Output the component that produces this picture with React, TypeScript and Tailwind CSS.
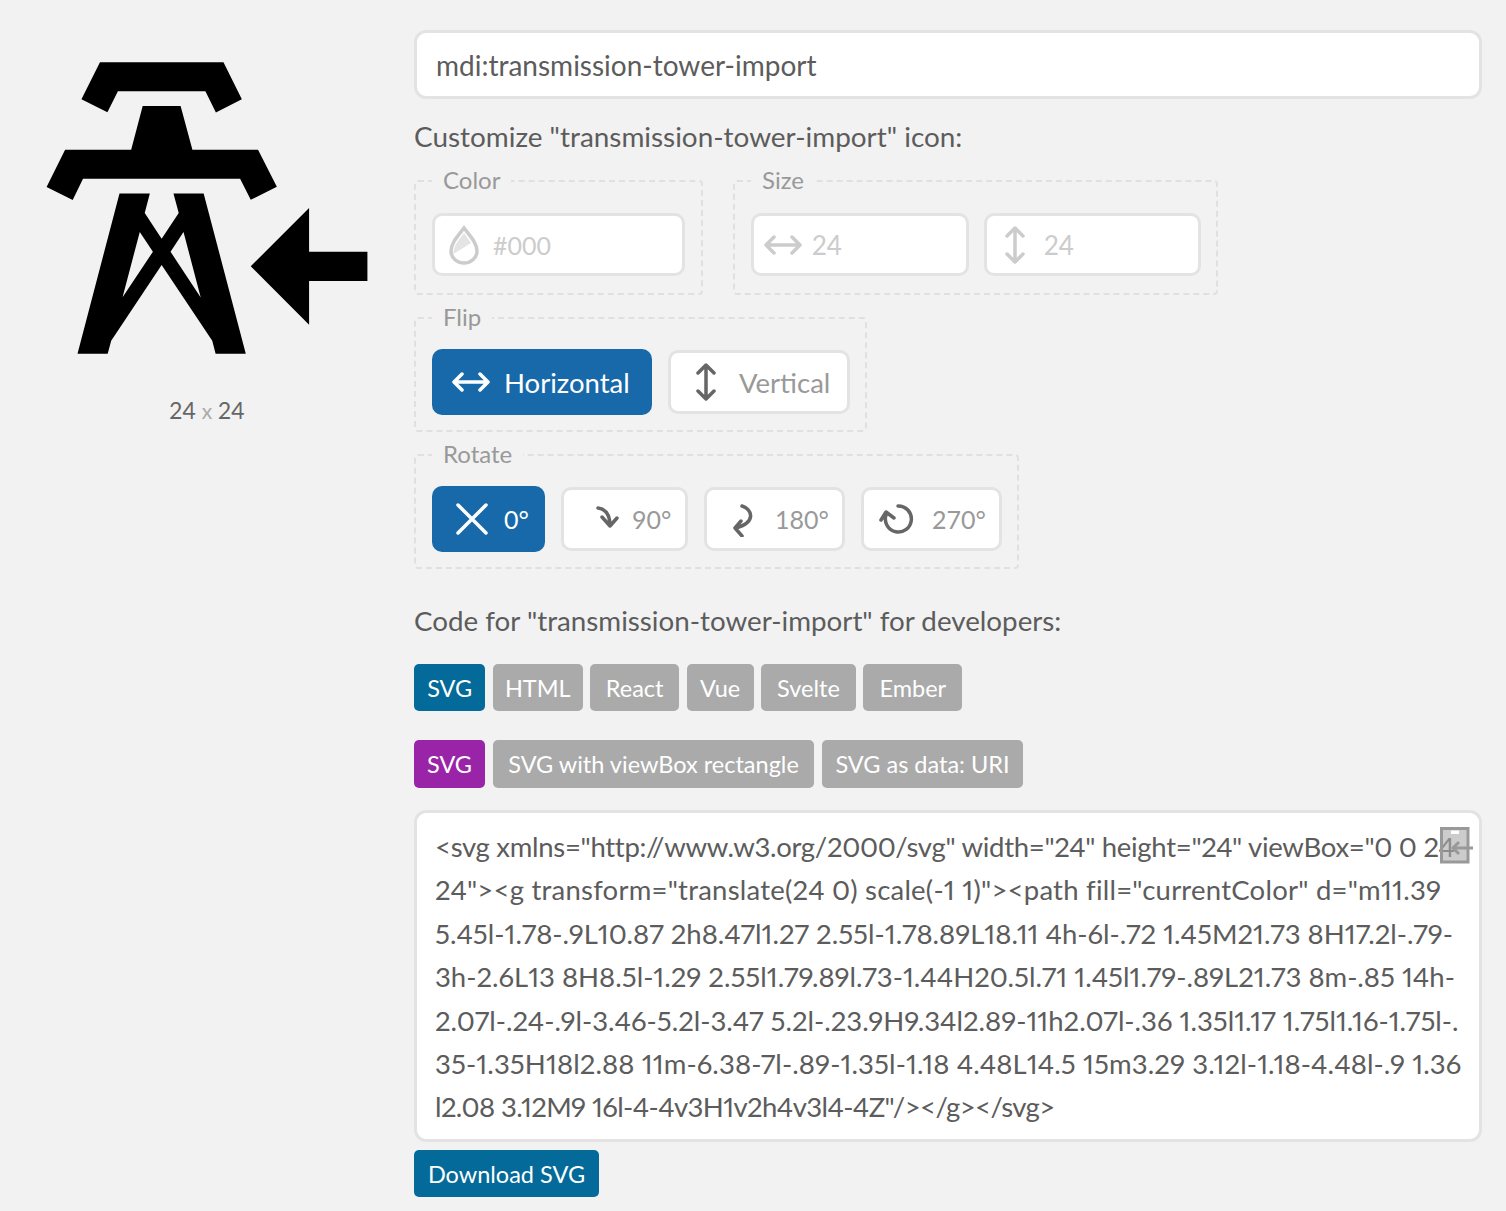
const iconPath =
  "m11.39 5.45l-1.78-.9L10.87 2h8.47l1.27 2.55l-1.78.89L18.11 4h-6l-.72 1.45M21.73 8H17.2l-.79-3h-2.6L13 8H8.5l-1.29 2.55l1.79.89l.73-1.44H20.5l.71 1.45l1.79-.89L21.73 8m-.85 14h-2.07l-.24-.9l-3.46-5.2l-3.47 5.2l-.23.9H9.34l2.89-11h2.07l-.36 1.35l1.17 1.75l1.16-1.75l-.35-1.35H18l2.88 11m-6.38-7l-.89-1.35l-1.18 4.48L14.5 15m3.29 3.12l-1.18-4.48l-.9 1.36l2.08 3.12M9 16l-4-4v3H1v2h4v3l4-4Z";

// tracking per line keeps the wrap ends where they are in the reference
const codeLines = [
  { text: '<svg xmlns="http://www.w3.org/2000/svg" width="24" height="24" viewBox="0 0 24', track: "tracking-[-0.3px]" },
  { text: '24"><g transform="translate(24 0) scale(-1 1)"><path fill="currentColor" d="m11.39', track: "tracking-[0.23px]" },
  { text: "5.45l-1.78-.9L10.87 2h8.47l1.27 2.55l-1.78.89L18.11 4h-6l-.72 1.45M21.73 8H17.2l-.79-", track: "" },
  { text: "3h-2.6L13 8H8.5l-1.29 2.55l1.79.89l.73-1.44H20.5l.71 1.45l1.79-.89L21.73 8m-.85 14h-", track: "" },
  { text: "2.07l-.24-.9l-3.46-5.2l-3.47 5.2l-.23.9H9.34l2.89-11h2.07l-.36 1.35l1.17 1.75l1.16-1.75l-.", track: "" },
  { text: "35-1.35H18l2.88 11m-6.38-7l-.89-1.35l-1.18 4.48L14.5 15m3.29 3.12l-1.18-4.48l-.9 1.36", track: "tracking-[0.1px]" },
  { text: 'l2.08 3.12M9 16l-4-4v3H1v2h4v3l4-4Z"/></g></svg>', track: "tracking-[-0.6px]" },
];

function ArrowH({ color }: { color: string }) {
  return (
    <svg width="38" height="22" viewBox="0 0 38 22" fill="none" stroke={color} strokeWidth="3.5" strokeLinecap="round" strokeLinejoin="round">
      <path d="M3 11h32M10 3l-8 8l8 8M28 3l8 8l-8 8" />
    </svg>
  );
}

function ArrowV({ color }: { color: string }) {
  return (
    <svg width="22" height="38" viewBox="0 0 22 38" fill="none" stroke={color} strokeWidth="3.5" strokeLinecap="round" strokeLinejoin="round">
      <path d="M11 3v32M3 10l8-8l8 8M3 28l8 8l8-8" />
    </svg>
  );
}

function Drop() {
  return (
    <svg width="34" height="40" viewBox="0 0 34 40">
      <path d="M17 3C11 11 4 18 4 26a13 12 0 0 0 26 0C30 18 23 11 17 3Z" fill="none" stroke="#ccc" strokeWidth="3.5" />
      <path d="M6.5 29C6 20 13 14 17 8C20 12 22 15 24 18Z" fill="#e4e4e4" />
    </svg>
  );
}

function Box({ legend, className, children }: { legend: string; className: string; children: React.ReactNode }) {
  return (
    <fieldset className={`border-2 border-dashed border-[#e0e0e0] rounded-[4px] pl-4 h-[127px] ${className}`}>
      <legend className="px-[11px] text-[#999] text-[24px] leading-[25px] -mb-1 -translate-y-px">{legend}</legend>
      {children}
    </fieldset>
  );
}

function NumInput({ width, pl, gap, icon, value, text = "text-[26px] proportional-nums" }: { width: string; pl: string; gap: string; icon: React.ReactNode; value: string; text?: string }) {
  return (
    <div className={`h-[63px] ${width} ${pl} ${gap} bg-white border-[3px] border-[#e3e3e3] rounded-[10px] flex items-center text-[#ccc] ${text}`}>
      {icon}
      <span className="pt-[2px]">{value}</span>
    </div>
  );
}

function Toggle({ width, pl, gap, active, icon, label, text = "text-[27.5px]" }: { width: string; pl: string; gap: string; active?: boolean; icon: React.ReactNode; label: string; text?: string }) {
  return (
    <button
      className={`${width} ${pl} ${gap} flex items-center rounded-[10px] ${text} ${
        active ? "h-[66px] bg-[#1769aa] text-white" : "h-[64px] bg-white text-[#999] border-[3px] border-[#e3e3e3]"
      }`}
    >
      {icon}
      <span className="pt-[2px]">{label}</span>
    </button>
  );
}

function Tab({ label, width, color = "bg-[#aaaaaa]", h = "h-[47px]" }: { label: string; width: string; color?: string; h?: string }) {
  return (
    <span className={`${width} ${h} ${color} rounded-[5px] text-white text-[23.5px] pt-[2px] flex items-center justify-center`}>
      {label}
    </span>
  );
}

export default function App() {
  return (
    <div className="w-[1506px] h-[1211px] bg-[#f2f2f2] flex font-['Lato',sans-serif] text-[#5c5c5c] overflow-hidden">
      <div className="w-[414px] flex flex-col items-center pt-[33px]">
        <svg width="350" height="350" viewBox="0 0 24 24">
          <g transform="translate(24 0) scale(-1 1)">
            <path fill="#000" d={iconPath} />
          </g>
        </svg>
        <div className="mt-[12px] text-[23px] leading-[30px] text-[#666] proportional-nums">
          24 <span className="text-[#aaa] text-[21px]">x</span> 24
        </div>
      </div>

      <div className="w-[1068px] pt-[30px]">
        <div className="h-[69px] bg-white border-[3px] border-[#e3e3e3] rounded-[12px] flex items-center pl-[19px] text-[28px]">
          mdi:transmission-tower-import
        </div>

        <div className="mt-[19px] h-[36px] text-[27.9px] leading-[36px]">Customize "transmission-tower-import" icon:</div>

        <div className="mt-[14px] flex gap-[30px]">
          <Box legend="Color" className="w-[289px]">
            <div className="pt-[24px]">
              <NumInput width="w-[253px]" pl="pl-[12px]" gap="gap-[12px]" icon={<Drop />} value="#000" text="text-[25px] tabular-nums" />
            </div>
          </Box>
          <Box legend="Size" className="w-[485px]">
            <div className="pt-[24px] flex gap-[15px]">
              <NumInput width="w-[218px]" pl="pl-[10px]" gap="gap-[10px]" icon={<ArrowH color="#ccc" />} value="24" />
              <NumInput width="w-[217px]" pl="pl-[17px]" gap="gap-[18px]" icon={<ArrowV color="#ccc" />} value="24" />
            </div>
          </Box>
        </div>

        <Box legend="Flip" className="w-[453px] mt-[10px]">
          <div className="pt-[23px] flex gap-[16px] items-center">
            <Toggle width="w-[220px]" pl="pl-[20px]" gap="gap-[14px]" active icon={<ArrowH color="#fff" />} label="Horizontal" />
            <Toggle width="w-[182px]" pl="pl-[24px]" gap="gap-[22px]" icon={<ArrowV color="#666" />} label="Vertical" />
          </div>
        </Box>

        <Box legend="Rotate" className="w-[605px] mt-[10px]">
          <div className="pt-[23px] flex gap-[16px] items-center">
            <Toggle
              width="w-[113px]"
              pl="pl-[24px]"
              gap="gap-[16px]"
              active
              label="0°"
              text="text-[25px]"
              icon={
                <svg width="32" height="32" viewBox="0 0 32 32" stroke="#fff" strokeWidth="3.5" strokeLinecap="round">
                  <path d="M2 2l28 28M30 2L2 30" />
                </svg>
              }
            />
            <Toggle
              width="w-[127px]"
              pl="pl-[25px]"
              gap="gap-[7px]"
              label="90°"
              text="text-[25px]"
              icon={
                <svg width="36" height="36" viewBox="0 0 36 36" fill="none" stroke="#666" strokeWidth="3.5" strokeLinecap="round" strokeLinejoin="round">
                  <path d="M9 7c7 1 12 6 12 18M13 16l8 9l7-8" />
                </svg>
              }
            />
            <Toggle
              width="w-[141px]"
              pl="pl-[14px]"
              gap="gap-[18px]"
              label="180°"
              text="text-[25px]"
              icon={
                <svg width="36" height="36" viewBox="0 0 36 36" fill="none" stroke="#666" strokeWidth="3.5" strokeLinecap="round" strokeLinejoin="round">
                  <path d="M21 5C31 8 36 21 15 27M20 20l-6 7l7 8" />
                </svg>
              }
            />
            <Toggle
              width="w-[141px]"
              pl="pl-[15px]"
              gap="gap-[17px]"
              label="270°"
              text="text-[25px]"
              icon={
                <svg width="36" height="36" viewBox="0 0 36 36" fill="none" stroke="#666" strokeWidth="3.5" strokeLinecap="round" strokeLinejoin="round">
                  <path d="M19 5A13 13 0 1 1 7 14M2 19l5-8l8 6" />
                </svg>
              }
            />
          </div>
        </Box>

        <div className="mt-[34px] h-[36px] text-[27.75px] leading-[36px]">Code for "transmission-tower-import" for developers:</div>

        <div className="mt-[25px] flex gap-[7.4px]">
          <Tab label="SVG" width="w-[71.4px]" color="bg-[#046a99]" />
          <Tab label="HTML" width="w-[90px]" />
          <Tab label="React" width="w-[89px]" />
          <Tab label="Vue" width="w-[67px]" />
          <Tab label="Svelte" width="w-[95px]" />
          <Tab label="Ember" width="w-[99px]" />
        </div>

        <div className="mt-[29px] flex gap-[8px]">
          <Tab label="SVG" width="w-[71px]" color="bg-[#9a24a8]" h="h-[48px]" />
          <Tab label="SVG with viewBox rectangle" width="w-[321px]" h="h-[48px]" />
          <Tab label="SVG as data: URI" width="w-[201px]" h="h-[48px]" />
        </div>

        <div className="relative mt-[22px] h-[332px] bg-white border-[3px] border-[#e3e3e3] rounded-[12px] pl-[18px] pt-[12px] text-[27.5px] leading-[43.4px] proportional-nums">
          {codeLines.map((line) => (
            <div key={line.text} className={`whitespace-nowrap ${line.track}`}>
              {line.text}
            </div>
          ))}
          <svg className="absolute right-[5px] top-[13px]" width="36" height="38" viewBox="0 0 36 38">
            <path d="M3.5 2.5H30V36H3.5Z" fill="#aaa" fillOpacity="0.6" stroke="#999" strokeWidth="3" />
            <path d="M13 4.5h8V8h-8Z" fill="#fff" />
            <path d="M15 22h20M21 16l-6 6l6 6" fill="none" stroke="#999" strokeWidth="3" />
          </svg>
        </div>

        <div className="mt-[8px] inline-flex">
          <Tab label="Download SVG" width="w-[185px]" color="bg-[#046a99]" />
        </div>
      </div>
    </div>
  );
}
